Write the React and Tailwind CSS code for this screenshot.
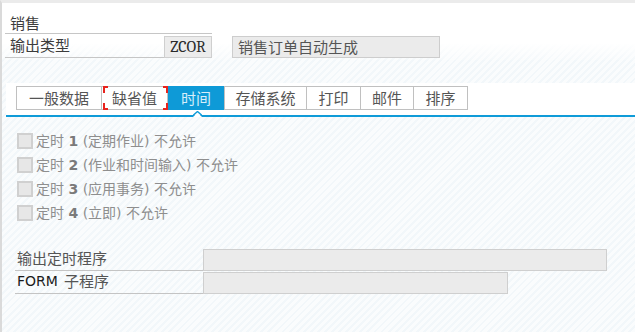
export default function App() {
  const cjk = "font-['Noto_Sans_CJK_SC',sans-serif]";
  const tabs = [
    { t: "一般数据", w: "w-[86px]" },
    { t: "缺省值", w: "w-[66px]", focus: true },
    { t: "时间", w: "w-[56px]", active: true },
    { t: "存储系统", w: "w-[83px]" },
    { t: "打印", w: "w-[54px]" },
    { t: "邮件", w: "w-[53px]" },
    { t: "排序", w: "w-[54px]" },
  ];
  const checks = [
    ["1", "(定期作业)"],
    ["2", "(作业和时间输入)"],
    ["3", "(应用事务)"],
    ["4", "(立即)"],
  ];
  return (
    <div
      className={`w-[635px] h-[332px] overflow-hidden border-t-[3px] border-t-[#ebebeb] border-l-2 border-l-[#dadada] bg-[repeating-linear-gradient(135deg,#f2f7fa_0px,#f2f7fa_2px,#fafcfd_2px,#fafcfd_5px)] ${cjk}`}
    >
      {/* header */}
      <div className="pt-[9px] pl-[3px] pb-[2px] bg-[linear-gradient(to_bottom,#ffffff_0%,#ffffff_70%,rgba(255,255,255,0.2)_100%)]">
        <div className="w-[207px] h-[22px] border-b border-[#c6c6c6] pl-[5px] flex items-center text-[15px] leading-[20px] text-[#3c3c3c]">
          销售
        </div>
        <div className="flex items-start">
          <div className="w-[159px] h-[24px] border-b border-[#c6c6c6] pl-[5px] flex items-center text-[15px] text-[#3c3c3c]">
            输出类型
          </div>
          <div className="mt-[2px] w-[48px] h-[22px] bg-[#ececec] border border-[#cfcfcf] flex items-center justify-center">
            <span className="font-serif text-[16px] text-[#2a2a2a]">ZCOR</span>
          </div>
          <div className="ml-[20px] mt-[2px] w-[208px] h-[22px] bg-[#ebebeb] border border-[#cdcdcd] pl-[5px] flex items-center text-[15px] text-[#555]">
            销售订单自动生成
          </div>
        </div>
      </div>

      {/* tabs */}
      <div className="mt-[23px] ml-[4px] h-[34px] bg-white border-b-2 border-[#0f9bd8] relative">
        <div className="pt-[3px] pl-[10px] flex">
          {tabs.map((tab, i) =>
            tab.active ? (
              <div
                key={i}
                className={`${tab.w} h-[24px] bg-[#0e9ad7] text-[#d6eefa] text-[15px] flex items-center justify-center`}
              >
                {tab.t}
              </div>
            ) : (
              <div
                key={i}
                className={`${tab.w} h-[24px] border border-[#c0c0c0] ${i > 0 && !tabs[i - 1].active ? "border-l-0" : ""} text-[#555] text-[15px] flex items-center justify-center relative`}
              >
                {tab.t}
                {tab.focus && (
                  <>
                    <span className="absolute left-[1px] top-[-1px] w-[5px] h-[7px] border-l-2 border-t-2 border-[#e8231d]" />
                    <span className="absolute left-[1px] bottom-[-1px] w-[5px] h-[7px] border-l-2 border-b-2 border-[#e8231d]" />
                    <span className="absolute right-[-1px] top-[-1px] w-[5px] h-[7px] border-r-2 border-t-2 border-[#e8231d]" />
                    <span className="absolute right-[-1px] bottom-[-1px] w-[5px] h-[7px] border-r-2 border-b-2 border-[#e8231d]" />
                  </>
                )}
              </div>
            )
          )}
        </div>
        <svg
          className="absolute left-[187px] bottom-[-2px]"
          width="9"
          height="6"
          viewBox="0 0 9 6"
        >
          <polygon points="0,6 4.5,1.5 9,6" fill="#ffffff" />
          <polyline points="0,4.5 4.5,0.5 9,4.5" fill="none" stroke="#0f9bd8" strokeWidth="1.4" />
        </svg>
      </div>

      {/* checkboxes */}
      <div className="mt-[16px] pl-[15px] flex flex-col">
        {checks.map(([n, t], i) => (
          <div key={i} className="h-[24px] flex items-start">
            <div className="w-[16px] h-[16px] border-2 border-[#d0d0d0] bg-[#e7e7e7]" />
            <div className="ml-[3px] h-[16px] leading-[16px] text-[14px] text-[#8e8e8e] whitespace-pre font-['DejaVu_Sans','Noto_Sans_CJK_SC',sans-serif]">
              定时 <span className="font-semibold text-[#7a7a7a]">{n}</span> {t} 不允许
            </div>
          </div>
        ))}
      </div>

      {/* bottom fields */}
      <div className="mt-[20px] pl-[13px] flex flex-col gap-[1px]">
        <div className="flex">
          <div className="w-[188px] h-[22px] border-b border-[#c4c4c4] pl-[2px] flex items-end pb-[1px] text-[15px] text-[#555]">
            输出定时程序
          </div>
          <div className="w-[404px] h-[22px] bg-[#ebebeb] border border-[#cfcfcf]" />
        </div>
        <div className="flex">
          <div className="w-[188px] h-[22px] border-b border-[#c4c4c4] pl-[2px] flex items-end pb-[1px] text-[15px] text-[#555]">
            <span className="font-['DejaVu_Sans',sans-serif] text-[14px] text-[#1a1a1a] mr-[6px]">FORM</span>
            子程序
          </div>
          <div className="w-[305px] h-[22px] bg-[#ebebeb] border border-[#cfcfcf]" />
        </div>
      </div>
    </div>
  );
}
